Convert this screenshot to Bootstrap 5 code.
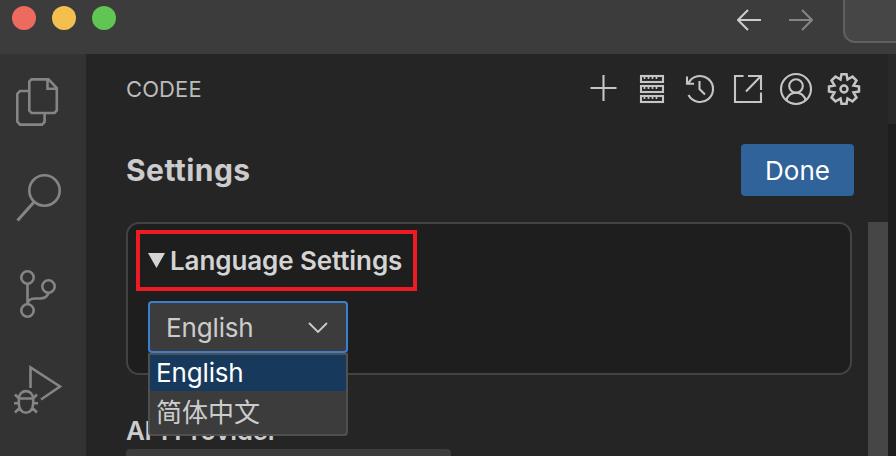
<!DOCTYPE html>
<html lang="en" data-bs-theme="dark">
<head>
<meta charset="utf-8">
<meta name="viewport" content="width=device-width, initial-scale=1">
<title>Codee Settings</title>
<link href="https://cdn.jsdelivr.net/npm/bootstrap@5.3.0/dist/css/bootstrap.min.css" rel="stylesheet">
<style>
body{font-family:Inter,"Noto Sans CJK SC",sans-serif;background:#1e1e1e;color:#ccc;height:456px}
svg{fill:none;display:block;flex:none}
.titlebar{height:54px;background:#3c3c3c}
.lights{gap:16px;padding:6px 0 0 12px}
.light{width:24px;height:24px}
.l-red{background:#ed6a5e}.l-yellow{background:#f5bf4f}.l-green{background:#61c554}
.command{width:72px;height:53px;margin-top:-10px;border:2px solid #606060;border-radius:12px;background:#464646;margin-right:-19px}
.arrows{padding:5px 30px 0 0;gap:28px}
.activity{width:86px;background:#333;stroke:#858585;stroke-width:2.6}
.side{width:802px;background:#252526}
.side-head{height:70px;padding:0 20px 0 40px}
.side-title{font-size:22px;line-height:26px;letter-spacing:.1px;color:#bbb}
.tools{stroke:#c5c5c5;stroke-width:2.1}
.heading{font-size:30px;line-height:36px;font-weight:700;letter-spacing:.45px;color:#ccc}
.top-row{padding:20px 34px 0 40px}
.btn-done{width:113px;height:52px;border-radius:4px;background:#2f639a;color:#fff;font-size:26px;line-height:1;padding:2px 0 0;border:0}
.scroll-area{margin-top:26px;padding-left:40px}
.thumb{width:20px;background:#464646}
.lang-card{width:726px;height:153px;border:2px solid #434343;border-radius:13px;background:#1e1e1e;padding:6px 0 0 8px}
.summary{width:281px;height:61px;border:4px solid #ed1c24;padding:0 0 0 8px;font-size:26px;font-weight:600;line-height:32px;letter-spacing:-.1px;color:#d4d4d4}
.select-wrap{width:200px;margin:10px 0 0 12px}
.select-box{height:52px;border:2px solid #3a7fd0;border-radius:4px;background:#3c3c3c;padding:2px 18px 0 16px;font-size:26px;line-height:32px;letter-spacing:-.15px}
.options{position:absolute;top:52px;left:0;width:200px;height:83px;z-index:5;background:#3c3c3c;border:2px solid #505050;border-radius:0 0 4px 4px;font-size:26px;line-height:36px}
.options div{padding-left:6px}
.picked{background:#17395c;color:#fff;height:36px;letter-spacing:-.15px}
.zh{height:43px;line-height:43px}
.provider{font-size:26px;font-weight:600;line-height:32px;margin-top:40px;letter-spacing:-.3px}
.field{width:325px;height:20px;background:#3c3c3c;border-radius:4px;margin-top:2px}
.editor-tab{height:70px;background:#292929}
</style>
<script src="https://cdn.jsdelivr.net/npm/bootstrap@5.3.0/dist/js/bootstrap.bundle.min.js"></script>
</head>
<body class="d-flex flex-column overflow-hidden">
<header class="titlebar d-flex justify-content-between overflow-hidden flex-shrink-0">
  <div class="lights d-flex"><span class="light rounded-circle l-red"></span><span class="light rounded-circle l-yellow"></span><span class="light rounded-circle l-green"></span></div>
  <div class="d-flex">
    <div class="arrows d-flex">
      <svg width="24" height="30" stroke="#ccc" stroke-width="2"><path d="M24 15H1M11 5 1 15 11 25"/></svg>
      <svg width="24" height="30" stroke="#858585" stroke-width="2"><path d="M0 15H23M13 5 23 15 13 25"/></svg>
    </div>
    <div class="command"></div>
  </div>
</header>
<div class="d-flex flex-grow-1 overflow-hidden">
  <nav class="activity flex-shrink-0">
    <svg width="86" height="96" viewBox="0 54 86 96"><path d="M29 91H20L17.3 94V121.500L20 124.600H42L44.600 122V114M31.500 79.400H48.500L56.800 88V110.500L54.500 113H31.500L29.300 110.500V81.500ZM47.500 80V88.700H56"/></svg>
    <svg width="86" height="96" viewBox="0 150 86 96"><circle cx="44.500" cy="190.500" r="15.200"/><path stroke-width="3" d="M34.500 201.500 17.500 220.500"/></svg>
    <svg width="86" height="96" viewBox="0 246 86 96"><circle cx="27.500" cy="277.500" r="6.200"/><circle cx="48.500" cy="286.500" r="6.200"/><circle cx="27.500" cy="310.500" r="6.200"/><path d="M27.500 284V304C28 300 31 298.500 35 298.500H40C45 298.500 47.500 296 48.500 293"/></svg>
    <svg width="86" height="96" viewBox="0 342 86 96"><path d="M30.500 388V367.500L60 386.500 41 399.500"/><path d="M19 398.500H33M18.800 403V399C18.800 388.500 33.200 388.500 33.200 399V403C33.200 416 18.800 416 18.800 403ZM14 403.300H19M33 403.300H38M15 394.500 19.500 399M37 394.500 32.500 399M15 412.500 20 407.500M37 412.500 32 407.500"/></svg>
  </nav>
  <main class="side d-flex flex-column flex-shrink-0">
    <div class="side-head d-flex align-items-center justify-content-between flex-shrink-0">
      <span class="side-title">CODEE</span>
      <div class="tools d-flex">
        <svg width="48" height="48" viewBox="580 65 48 48"><path d="M590.500 88H616.500M603.500 75V101"/></svg>
        <svg width="48" height="48" viewBox="628 65 48 48"><g id="srv"><rect x="641" y="76" width="22" height="6"/><path stroke-width="1.700" d="M644.500 76V79M648.500 76V79M652.500 76V79M656.500 76V79"/></g><use href="#srv" y="10"/><use href="#srv" y="20"/></svg>
        <svg width="48" height="48" viewBox="676 65 48 48"><path d="M688.500 95A13 13 0 1 0 688.500 83M687 76.500V83.700H694M699.500 81V89L705 94.500"/></svg>
        <svg width="48" height="48" viewBox="724 65 48 48"><path d="M743.500 76H735V102H761V92.500M748 76H761V90M760.500 76.500 746 91.500"/></svg>
        <svg width="48" height="48" viewBox="772 65 48 48"><circle cx="796" cy="89" r="15"/><circle cx="796" cy="86" r="6.800"/><path d="M786.500 100.500C788 90 804 90 805.500 100.500"/></svg>
        <svg width="48" height="48" viewBox="820 65 48 48"><path stroke-width="2.500" d="M841.500 74.200H846.500L847.500 79.500 852.500 76.500 856.500 80.500 853.500 85.500 859 86.500V91.500L853.500 92.500 856.500 97.500 852.500 101.500 847.500 98.500 846.500 103.800H841.500L840.500 98.500 835.500 101.500 831.500 97.500 834.500 92.500 829 91.500V86.500L834.500 85.500 831.500 80.500 835.500 76.500 840.500 79.500Z"/><circle cx="844" cy="89" r="3.500" stroke-width="2.500"/></svg>
      </div>
    </div>
    <div class="top-row d-flex align-items-center justify-content-between flex-shrink-0">
      <h3 class="heading m-0">Settings</h3>
      <button class="btn btn-done" type="button">Done</button>
    </div>
    <div class="scroll-area d-flex justify-content-between flex-grow-1">
      <div>
        <section class="lang-card">
          <div class="summary d-flex align-items-center"><svg class="me-1" width="18" height="16"><path fill="#d4d4d4" d="M0 0H17L8.500 15Z"/></svg><span>Language Settings</span></div>
          <div class="select-wrap position-relative">
            <div class="select-box d-flex align-items-center justify-content-between"><span>English</span><svg width="20" height="14" stroke="#ccc" stroke-width="1.800"><path d="M1 2 10 11 19 2"/></svg></div>
            <div class="options"><div class="picked">English</div><div class="zh">简体中文</div></div>
          </div>
        </section>
        <div class="provider">API Provider</div>
        <div class="field"></div>
      </div>
      <div class="thumb"></div>
    </div>
  </main>
  <div class="flex-grow-1"><div class="editor-tab"></div></div>
</div>
</body>
</html>
